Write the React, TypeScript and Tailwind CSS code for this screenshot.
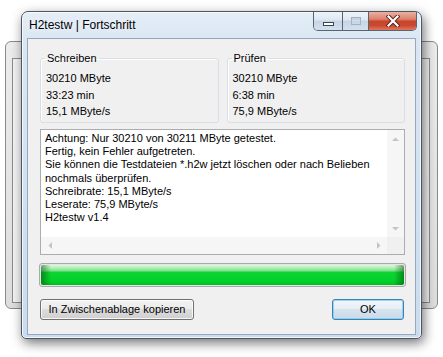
import React from "react";

const lines = [
  "Achtung: Nur 30210 von 30211 MByte getestet.",
  "Fertig, kein Fehler aufgetreten.",
  "Sie können die Testdateien *.h2w jetzt löschen oder nach Belieben",
  "nochmals überprüfen.",
  "Schreibrate: 15,1 MByte/s",
  "Leserate: 75,9 MByte/s",
  "H2testw v1.4",
];

function Tri({ dir }: { dir: "up" | "down" | "left" | "right" }) {
  const vert = dir === "up" || dir === "down";
  const w = vert ? 7 : 4;
  const h = vert ? 4 : 7;
  const d = {
    up: "M0 4L3.5 0.5L7 4Z",
    down: "M0 0L3.5 3.5L7 0Z",
    left: "M4 0L0.5 3.5L4 7Z",
    right: "M0 0L3.5 3.5L0 7Z",
  }[dir];
  return (
    <svg width={w} height={h} viewBox={`0 0 ${w} ${h}`}>
      <path d={d} fill="#c4c4c4" />
    </svg>
  );
}

function Group({ title, rows }: { title: string; rows: string[] }) {
  return (
    <fieldset className="flex-1 h-[72px] border border-[#d5dfe5] rounded-[3px] shadow-[inset_1px_1px_0_#ffffff]">
      <legend className="ml-[4px] px-[2px] leading-[14px]">{title}</legend>
      <div className="pt-[5px] pl-[5px]">
        {rows.map((r) => (
          <div key={r} className="leading-[16.5px] whitespace-nowrap">
            {r}
          </div>
        ))}
      </div>
    </fieldset>
  );
}

export default function App() {
  return (
    <div className="relative w-[443px] h-[357px] overflow-hidden bg-white font-['Liberation_Sans',Arial,sans-serif] text-[11px] text-black">
      {/* window behind */}
      <div className="absolute left-[5px] top-[41px] w-[433px] h-[268px] rounded-[6px] border border-[#8a8a8a] bg-[linear-gradient(180deg,#ececec,#dedede)] pt-[16px] pl-[6px] pr-[7px] pb-[5px]">
        <div className="h-full border border-[#8c8c8c] bg-[#f4f4f4]" />
      </div>

      {/* main window */}
      <div className="absolute left-[21px] top-[11px] w-[401px] h-[328px] rounded-t-[7px] rounded-b-[5px] border border-[#4b5563] bg-[linear-gradient(180deg,#e5eef7_0%,#d9e6f3_9%,#cbdcef_100%)] shadow-[2px_4px_12px_rgba(0,0,0,0.55),inset_0_0_0_1px_rgba(255,255,255,0.75)] flex flex-col">
        {/* title bar */}
        <div className="h-[26px] shrink-0 flex items-start justify-between">
          <div className="pl-[7px] self-center text-[12px] leading-[16px] [text-shadow:0_0_6px_#ffffff]">
            H2testw | Fortschritt
          </div>
          <div className="mr-[4px] flex h-[19px] rounded-b-[5px] overflow-hidden border border-t-0 border-[#5a6370]">
            <div className="w-[29px] h-full border-r border-[#5a6370] bg-[linear-gradient(180deg,#eef3f9_0%,#dde7f2_45%,#c6d5e5_50%,#d3e0ee_100%)] flex items-end justify-center pb-[4px]">
              <div className="w-[11px] h-[4px] border border-[#3a4350] bg-white" />
            </div>
            <div className="w-[26px] h-full border-r border-[#5a6370] bg-[linear-gradient(180deg,#eef3f9_0%,#dde7f2_45%,#c6d5e5_50%,#d3e0ee_100%)] flex items-center justify-center">
              <div className="w-[10px] h-[8px] border border-[#a3b1c0] shadow-[inset_0_2px_0_#c9d3de]" />
            </div>
            <div className="w-[47px] h-full bg-[linear-gradient(180deg,#eab1a3_0%,#dd806b_40%,#c7442b_52%,#c94a30_75%,#e2765a_100%)] flex items-center justify-center">
              <svg width="14" height="12" viewBox="0 0 14 12">
                <path d="M2.5 1.5L11.5 10.5M11.5 1.5L2.5 10.5" stroke="#5a1e14" strokeWidth="4" strokeLinecap="square" />
                <path d="M2.5 1.5L11.5 10.5M11.5 1.5L2.5 10.5" stroke="#ffffff" strokeWidth="2.2" strokeLinecap="square" />
              </svg>
            </div>
          </div>
        </div>

        {/* client area */}
        <div className="flex-1 mx-[5px] mb-[3px] border border-[#95a8bd] bg-[#f0f0f0] pt-[12px] pl-[12px] pr-[10px] flex flex-col">
          <div className="flex gap-[8px]">
            <Group title="Schreiben" rows={["30210 MByte", "33:23 min", "15,1 MByte/s"]} />
            <Group title="Prüfen" rows={["30210 MByte", "6:38 min", "75,9 MByte/s"]} />
          </div>

          {/* memo */}
          <div className="mt-[6px] h-[126px] border border-[#abadb3] bg-white flex flex-col">
            <div className="flex flex-1 min-h-0">
              <div className="flex-1 min-w-0 pl-[4px] pt-[2px] leading-[13.2px] whitespace-nowrap overflow-hidden">
                {lines.map((l) => (
                  <div key={l}>{l}</div>
                ))}
              </div>
              <div className="w-[17px] bg-[#f6f6f6] flex flex-col justify-between">
                <div className="h-[17px] flex items-center justify-center">
                  <Tri dir="up" />
                </div>
                <div className="h-[17px] flex items-center justify-center">
                  <Tri dir="down" />
                </div>
              </div>
            </div>
            <div className="h-[17px] flex">
              <div className="flex-1 bg-[#f6f6f6] flex justify-between">
                <div className="w-[17px] flex items-center justify-center">
                  <Tri dir="left" />
                </div>
                <div className="w-[17px] flex items-center justify-center">
                  <Tri dir="right" />
                </div>
              </div>
              <div className="w-[17px] bg-[#f0f0f0]" />
            </div>
          </div>

          {/* progress */}
          <div className="mt-[8px] -mx-px h-[24px] rounded-[3px] border border-[#a9a9a9] bg-[#e6e6e6] p-px">
            <div className="h-full rounded-[2px] bg-[linear-gradient(90deg,rgba(0,70,0,0.5)_0px,rgba(0,70,0,0)_10px,rgba(0,70,0,0)_calc(100%_-_10px),rgba(0,70,0,0.5)_100%),linear-gradient(180deg,#dcf8dc_0%,#b0efb6_15%,#74e182_30%,#0fd333_36%,#00d12a_80%,#00bd24_100%)]" />
          </div>

          {/* buttons */}
          <div className="mt-[12px] flex justify-between pr-px">
            <button className="h-[21px] w-[154px] rounded-[3px] border border-[#707070] bg-[linear-gradient(180deg,#f2f2f2_0%,#ebebeb_45%,#dddddd_50%,#cfcfcf_100%)] shadow-[inset_0_0_0_1px_rgba(255,255,255,0.8)] leading-[19px]">
              In Zwischenablage kopieren
            </button>
            <button className="h-[21px] w-[72px] rounded-[3px] border border-[#3c7fb1] bg-[linear-gradient(180deg,#f1f6fb_0%,#e6eef6_45%,#d6e3ee_50%,#c9dbe9_100%)] shadow-[inset_0_0_0_1px_rgba(120,200,245,0.7)] leading-[19px]">
              OK
            </button>
          </div>
        </div>
      </div>
    </div>
  );
}
